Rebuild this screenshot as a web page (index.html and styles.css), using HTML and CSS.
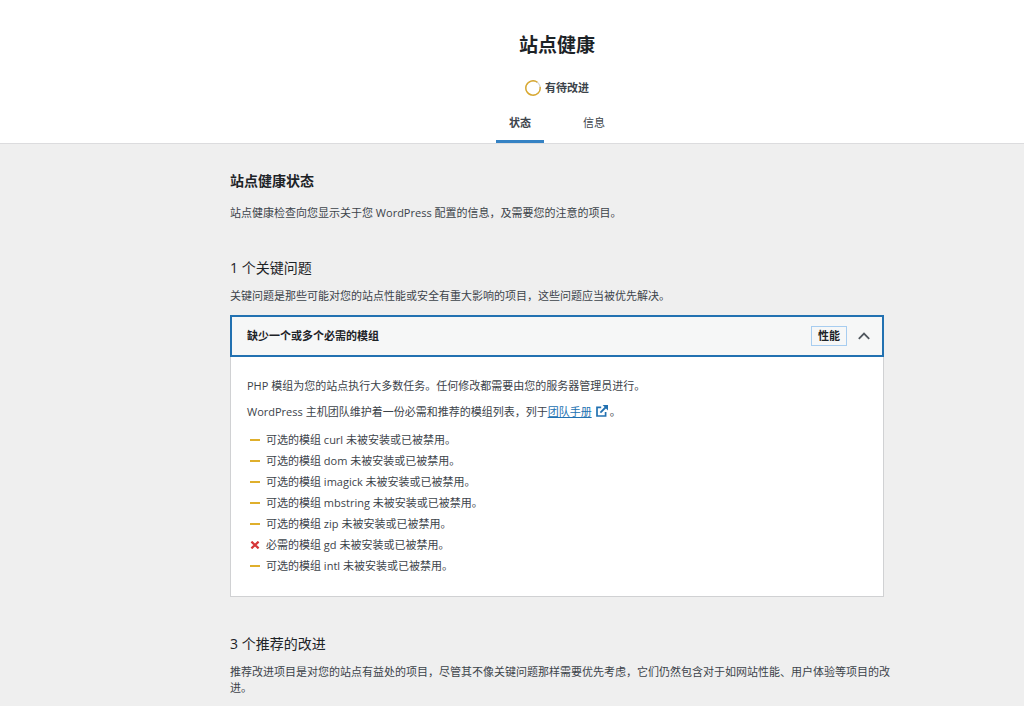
FILE: index.html
```html
<!DOCTYPE html>
<html lang="zh-CN">
<head>
<meta charset="utf-8">
<meta name="viewport" content="width=device-width, initial-scale=1">
<title>站点健康</title>
<link rel="stylesheet" href="styles.css">
</head>
<body>
<header class="header">
  <h1 class="title">站点健康</h1>
  <div class="progress">
    <svg class="ring" width="16" height="16" viewBox="0 0 16 16" fill="none" aria-hidden="true">
      <circle cx="8" cy="8" r="7.2" stroke="#d5d5d5" stroke-width="1.2"/>
      <path d="M15.1 6.8A7.2 7.2 0 1 1 12.4 2.3" stroke="#dba92c" stroke-width="1.4"/>
    </svg>
    <span>有待改进</span>
  </div>
  <nav class="tabs">
    <a class="tab tab-active" href="#status" aria-current="true">状态</a>
    <a class="tab" href="#info">信息</a>
  </nav>
</header>
<main class="main" id="status">
  <div class="column">
    <h2 class="heading">站点健康状态</h2>
    <p class="text">站点健康检查向您显示关于您 WordPress 配置的信息，及需要您的注意的项目。</p>

    <section class="issues">
      <h3 class="subheading">1 个关键问题</h3>
      <p class="text">关键问题是那些可能对您的站点性能或安全有重大影响的项目，这些问题应当被优先解决。</p>
      <div class="accordion">
        <button class="trigger" type="button" aria-expanded="true" aria-controls="panel">
          <span class="trigger-title">缺少一个或多个必需的模组</span>
          <span class="badge">性能</span>
          <svg class="chevron" width="12" height="8" viewBox="0 0 12 8" fill="none" stroke="#50575e" stroke-width="1.8" aria-hidden="true"><path d="M.8 6.8 6 1.6l5.2 5.2"/></svg>
        </button>
        <div class="panel" id="panel">
          <p class="text">PHP 模组为您的站点执行大多数任务。任何修改都需要由您的服务器管理员进行。</p>
          <p class="text">WordPress 主机团队维护着一份必需和推荐的模组列表，列于<a class="link" href="#handbook">团队手册<svg class="external" width="12" height="12" viewBox="0 0 12 12" fill="none" stroke="#2271b1" aria-hidden="true"><path d="M5.2 2.4H1v8.6h8.6V7" stroke-width="1.7"/><path d="M4.4 7.6 10 2" stroke-width="1.8"/><path d="M6.6 0H12v5.4z" fill="#2271b1" stroke="none"/></svg></a>。</p>
          <ul class="modules">
            <li class="module"><span class="mark dash"></span>可选的模组 curl 未被安装或已被禁用。</li>
            <li class="module"><span class="mark dash"></span>可选的模组 dom 未被安装或已被禁用。</li>
            <li class="module"><span class="mark dash"></span>可选的模组 imagick 未被安装或已被禁用。</li>
            <li class="module"><span class="mark dash"></span>可选的模组 mbstring 未被安装或已被禁用。</li>
            <li class="module"><span class="mark dash"></span>可选的模组 zip 未被安装或已被禁用。</li>
            <li class="module"><svg class="mark" width="10" height="8" viewBox="0 0 10 8" stroke="#d63638" stroke-width="2.2" aria-hidden="true"><path d="M1.4.6l7.2 6.8M8.6.6L1.4 7.4"/></svg>必需的模组 gd 未被安装或已被禁用。</li>
            <li class="module"><span class="mark dash"></span>可选的模组 intl 未被安装或已被禁用。</li>
          </ul>
        </div>
      </div>
    </section>

    <section class="issues">
      <h3 class="subheading">3 个推荐的改进</h3>
      <p class="text text-wide">推荐改进项目是对您的站点有益处的项目，尽管其不像关键问题那样需要优先考虑，它们仍然包含对于如网站性能、用户体验等项目的改进。</p>
    </section>
  </div>
</main>
</body>
</html>
```
FILE: styles.css
```css
* { box-sizing: border-box; }

body {
  margin: 0;
  background: #efefef;
  color: #3c434a;
  font-family: "Open Sans", "Noto Sans CJK SC", sans-serif;
  font-size: 11px;
  line-height: 16px;
}

h1, h2, h3, p, ul { margin: 0; padding: 0; }

.header {
  display: flex;
  flex-direction: column;
  align-items: center;
  padding: 32px 0 0 90px;
  background: #fff;
  border-bottom: 1px solid #dcdcde;
}

.title {
  color: #1d2327;
  font-size: 19px;
  font-weight: 700;
  line-height: 26px;
}

.progress {
  display: flex;
  align-items: center;
  gap: 4px;
  margin-top: 22px;
  font-weight: 700;
}

.ring { display: block; }

.tabs {
  display: flex;
  gap: 26px;
  margin-top: 12px;
}

.tab {
  min-width: 48px;
  padding: 7px 12px 9px;
  border-bottom: 3px solid transparent;
  color: #3c434a;
  text-align: center;
  text-decoration: none;
}

.tab-active {
  border-bottom-color: #3582c4;
  font-weight: 700;
}

.main { padding: 27px 0 0 90px; }

.column {
  max-width: 654px;
  margin: 0 auto;
}

.heading {
  color: #1d2327;
  font-size: 14px;
  font-weight: 700;
  line-height: 20px;
}

.subheading {
  color: #1d2327;
  font-size: 14px;
  font-weight: 400;
  line-height: 20px;
}

.column > .text { margin-top: 14px; }

.issues { margin-top: 37px; }

.issues > .text { margin-top: 10px; }

.text-wide { margin-right: -8px; }

.accordion { margin-top: 11px; }

.trigger {
  display: flex;
  align-items: center;
  width: 100%;
  min-height: 42px;
  padding: 0 12px 0 15px;
  border: 2px solid #2271b1;
  background: #f6f7f7;
  color: #1d2327;
  font: inherit;
  text-align: left;
}

.trigger-title {
  flex: 1;
  font-weight: 700;
}

.badge {
  padding: 1px 6px;
  border: 1px solid #a7cdf0;
  font-weight: 700;
}

.chevron { margin-left: 11px; }

.panel {
  padding: 21px 16px 20px;
  border: 1px solid #d0d1d3;
  border-top: 0;
  background: #fff;
}

.panel .text + .text { margin-top: 10px; }

.link { color: #2271b1; }

.external {
  margin: 0 2px 0 4px;
  vertical-align: -1px;
}

.modules {
  margin-top: 9px;
  list-style: none;
}

.module {
  display: flex;
  align-items: center;
  line-height: 21px;
}

.mark {
  flex: none;
  width: 10px;
  margin: 0 6px 0 3px;
}

.dash {
  height: 2px;
  background: #dfaf2c;
}
```
